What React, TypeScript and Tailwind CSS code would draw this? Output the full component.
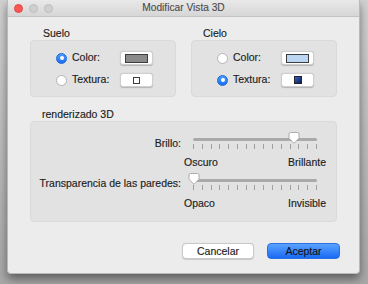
import React from "react";

function Radio({ on }: { on: boolean }) {
  return on ? (
    <div className="w-[11px] h-[11px] rounded-full bg-gradient-to-b from-[#4a9bff] to-[#1c6ef2] border border-[#1f66d6] flex items-center justify-center shrink-0">
      <div className="w-[4px] h-[4px] rounded-full bg-white" />
    </div>
  ) : (
    <div className="w-[11px] h-[11px] rounded-full bg-white border border-[#b4b4b4] shrink-0" />
  );
}

function Swatch({ children }: { children: React.ReactNode }) {
  return (
    <div className="w-[33px] h-[14px] rounded-[3px] bg-white border border-[#cfcfcf] shadow-[0_0.5px_1px_rgba(0,0,0,0.2)] flex items-center justify-center">
      {children}
    </div>
  );
}

function OptionRow({ on, label, swatch }: { on: boolean; label: string; swatch: React.ReactNode }) {
  return (
    <div className="flex items-center h-[14px]">
      <div className="w-[64px] flex items-center gap-[5px]">
        <Radio on={on} />
        <span>{label}</span>
      </div>
      <Swatch>{swatch}</Swatch>
    </div>
  );
}

function Group({ title, children, titlePad }: { title: string; children: React.ReactNode; titlePad: string }) {
  return (
    <div className="w-[146px] flex flex-col">
      <div className={`h-[12px] leading-[12px] mb-[1px] ${titlePad}`}>{title}</div>
      <div className="h-[57px] rounded-[4px] bg-[#e2e2e2] border border-[#dadada] pl-[25px] pt-[10px] flex flex-col gap-[8px]">
        {children}
      </div>
    </div>
  );
}

function Thumb() {
  return (
    <svg width="12" height="12" viewBox="0 0 12 12">
      <path
        d="M1 2 Q1 0.5 2.5 0.5 H9.5 Q11 0.5 11 2 V6.2 L6 11.3 L1 6.2 Z"
        fill="#ffffff"
        stroke="#9c9c9c"
        strokeWidth="0.8"
      />
    </svg>
  );
}

function Slider({ thumbLeft, left, right }: { thumbLeft: number; left: string; right: string }) {
  const ticks = Array.from({ length: 15 });
  return (
    <div className="w-[142px] flex flex-col">
      <div className="relative h-[10px]">
        <div className="absolute left-[9px] right-[9px] top-[4px] h-[2.5px] rounded-full bg-[#a9a9a9]" />
        <div className="absolute top-[-2px]" style={{ left: thumbLeft }}>
          <Thumb />
        </div>
      </div>
      <div className="h-[5px] px-[9px] flex justify-between">
        {ticks.map((_, i) => (
          <div key={i} className="w-[1px] h-[5px] bg-[#a0a0a0]" />
        ))}
      </div>
      <div className="mt-[7px] h-[12px] leading-[12px] flex justify-between">
        <span>{left}</span>
        <span>{right}</span>
      </div>
    </div>
  );
}

export default function App() {
  return (
    <div
      className="w-[368px] h-[284px] overflow-hidden bg-gradient-to-b from-[#d2d2d2] to-[#a8a8a8] text-[10.5px] text-[#1c1c1c] [-webkit-text-stroke:0.15px_#1c1c1c]"
      style={{ fontFamily: '"Liberation Sans", Arial, sans-serif' }}
    >
      <div className="ml-[7px] w-[353px] h-[274px] bg-[#ececec] border-x border-b border-[#b9b9b9] rounded-b-[4px] shadow-[0_5px_10px_rgba(0,0,0,0.45)] flex flex-col">
        <div className="h-[17px] bg-gradient-to-b from-[#e9e9e9] to-[#d6d6d6] border-b border-[#c4c4c4] flex items-center relative">
          <div className="flex gap-[6px] pl-[6px]">
            <div className="w-[9px] h-[9px] rounded-full bg-[#fc5753] border border-[#df4744]" />
            <div className="w-[9px] h-[9px] rounded-full bg-[#cfcfcf] border border-[#bdbdbd]" />
            <div className="w-[9px] h-[9px] rounded-full bg-[#cfcfcf] border border-[#bdbdbd]" />
          </div>
          <div className="absolute inset-0 flex items-center justify-center text-[10.2px] text-[#4a4a4a] [-webkit-text-stroke:0.1px_#4a4a4a] leading-[12px]">
            Modificar Vista 3D
          </div>
        </div>
        <div className="px-[22px] pt-[10px] flex flex-col">
          <div className="flex justify-between">
            <Group title="Suelo" titlePad="pl-[13px]">
              <OptionRow
                on={true}
                label="Color:"
                swatch={<div className="w-[23px] h-[9px] bg-[#8a8a8a] border border-[#3c3c3c]" />}
              />
              <OptionRow
                on={false}
                label="Textura:"
                swatch={<div className="w-[7px] h-[7px] bg-white border border-[#3c3c3c]" />}
              />
            </Group>
            <Group title="Cielo" titlePad="pl-[12px]">
              <OptionRow
                on={false}
                label="Color:"
                swatch={<div className="w-[23px] h-[9px] bg-[#bcd5f3] border border-[#3c3c3c]" />}
              />
              <OptionRow
                on={true}
                label="Textura:"
                swatch={<div className="w-[8px] h-[8px] bg-gradient-to-br from-[#3a64c8] to-[#0c1f5a] border border-[#222]" />}
              />
            </Group>
          </div>
          <div className="mt-[11px] h-[12px] leading-[12px] mb-[1px] pl-[12px]">renderizado 3D</div>
          <div className="h-[101px] rounded-[4px] bg-[#e2e2e2] border border-[#dadada] pt-[12px] pl-[11px] flex flex-col gap-[7px]">
            <div className="flex">
              <div className="w-[139px] text-right pt-[3px] leading-[12px]">Brillo:</div>
              <div className="ml-[3px]">
                <Slider thumbLeft={104} left="Oscuro" right="Brillante" />
              </div>
            </div>
            <div className="flex">
              <div className="w-[139px] text-right pt-[2px] leading-[12px] whitespace-nowrap flex justify-end">
                Transparencia de las paredes:
              </div>
              <div className="ml-[3px]">
                <Slider thumbLeft={4} left="Opaco" right="Invisible" />
              </div>
            </div>
          </div>
        </div>
        <div className="mt-[21px] pr-[19px] flex justify-end gap-[13px]">
          <button className="w-[72px] h-[16px] rounded-[4px] bg-white border border-[#c9c9c9] shadow-[0_0.5px_1px_rgba(0,0,0,0.15)] text-[10.5px] leading-[14px] text-[#1c1c1c]">
            Cancelar
          </button>
          <button className="w-[73px] h-[16px] rounded-[4px] bg-gradient-to-b from-[#5aa2ff] to-[#1669f2] border border-[#2b6fe0] text-[10.5px] leading-[14px] text-[#101020]">
            Aceptar
          </button>
        </div>
      </div>
    </div>
  );
}
